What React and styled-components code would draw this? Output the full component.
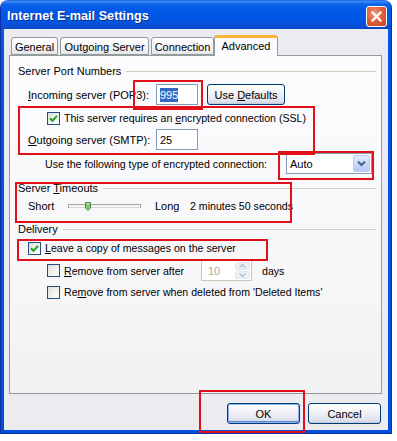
import React from "react";
import styled, { createGlobalStyle } from "styled-components";

const FS = "10.6px";

const Global = createGlobalStyle`
  html, body { margin: 0; padding: 0; background: #ffffff; }
  body { font-family: "Liberation Sans", Arial, sans-serif; font-size: ${FS}; color: #000; }
  * { box-sizing: border-box; }
`;

const Window = styled.div`
  position: relative;
  width: 392px;
  height: 434px;
  display: flex;
  flex-direction: column;
  border-radius: 8px 8px 0 0;
  background: linear-gradient(180deg, #3d8cf5 0%, #0a5de6 4%, #0055e5 10%, #0050dd 100%);
  border: 1px solid #0831a8;
  border-top-color: #2a6ee8;
  overflow: hidden;
`;

const TitleBar = styled.div`
  height: 28px;
  flex: none;
  display: flex;
  align-items: center;
  justify-content: space-between;
  padding: 1px 4px 0 6px;
  background: linear-gradient(180deg, #3b8ef9 0%, #0d62e6 12%, #0058e8 35%, #0257e4 70%, #0a4dd2 92%, #0a45c4 100%);
`;

const Title = styled.span`
  font-family: "Liberation Sans", Arial, sans-serif;
  font-weight: bold;
  font-size: 12.7px;
  color: #ffffff;
  text-shadow: 1px 1px 0 #0a2a8c;
`;

const CloseButton = styled.div`
  width: 21px;
  height: 21px;
  border-radius: 3px;
  border: 1px solid #ffffff;
  background: radial-gradient(circle at 40% 35%, #f0a080 0%, #e0623c 45%, #c8401c 100%);
  display: flex;
  align-items: center;
  justify-content: center;
  margin-top: 1px;
`;

const Body = styled.div`
  flex: 1;
  margin: 0 3px 3px 3px;
  background: #ecebf0;
  display: flex;
  flex-direction: column;
  padding: 6px 7px 0 5px;
`;

const TabRow = styled.div`
  display: flex;
  align-items: flex-end;
  height: 20px;
  padding-left: 2px;
  position: relative;
  z-index: 1;
`;

const Tab = styled.div`
  height: ${(p) => (p.$active ? "21px" : "18px")};
  padding: ${(p) => (p.$active ? "2px 6px 0 6px" : "1px 5px 0 5px")};
  margin-right: ${(p) => (p.$active ? "0" : "2px")};
  margin-left: ${(p) => (p.$active ? "-2px" : "0")};
  margin-bottom: ${(p) => (p.$active ? "-1px" : "0")};
  border: 1px solid #919b9c;
  border-bottom: ${(p) => (p.$active ? "none" : "1px solid #919b9c")};
  border-top: ${(p) => (p.$active ? "3px solid #f9b43a" : "1px solid #919b9c")};
  border-radius: 3px 3px 0 0;
  background: ${(p) =>
    p.$active ? "#fcfcfe" : "linear-gradient(180deg, #ffffff 0%, #f4f4f6 60%, #e6e6ea 100%)"};
  display: flex;
  align-items: ${(p) => (p.$active ? "flex-start" : "center")};
  white-space: nowrap;
  font-size: 11px;
  width: ${(p) => p.$w}px;
  justify-content: center;
`;

const Panel = styled.div`
  height: 339px;
  border: 1px solid #919b9c;
  background: linear-gradient(180deg, #fcfcfe 0%, #f6f6f9 70%, #f1f1f4 100%);
  padding: 8px 5px 0 8px;
  display: flex;
  flex-direction: column;
  width: 373px;
`;

const GroupTitle = styled.div`
  height: 14px;
  display: flex;
  align-items: center;
  gap: 5px;
  margin-top: ${(p) => p.$mt || 0}px;
  font-size: 11px;
  white-space: nowrap;
  &::after {
    content: "";
    flex: 1;
    height: 1px;
    background: #d0d0bf;
    margin-top: 1px;
  }
`;

const Row = styled.div`
  height: ${(p) => p.$h || 16}px;
  margin-top: ${(p) => p.$mt || 0}px;
  padding-left: ${(p) => p.$indent || 0}px;
  display: flex;
  align-items: center;
  white-space: nowrap;
  font-size: ${FS};
`;

const Label = styled.span`
  width: ${(p) => (p.$w ? `${p.$w}px` : "auto")};
  flex: none;
  margin-left: ${(p) => p.$ml || 0}px;
  font-size: ${(p) => p.$fs || "inherit"};
`;

const U = styled.span`
  text-decoration: underline;
  text-underline-offset: 1px;
`;

const TextBox = styled.div`
  width: ${(p) => p.$w}px;
  height: 21px;
  border: 1px solid #7f9db9;
  background: #ffffff;
  display: flex;
  align-items: center;
  padding-left: 3px;
  font-size: 11px;
`;

const Selected = styled.span`
  background: #316ac5;
  color: #ffffff;
  padding: 1px 0;
`;

const XPButton = styled.div`
  width: ${(p) => p.$w}px;
  height: 21px;
  margin-left: ${(p) => p.$ml || 0}px;
  border: 1px solid #003c74;
  border-radius: 3px;
  background: linear-gradient(180deg, #ffffff 0%, #f5f5f8 35%, #e4e7f0 75%, #d0d6e6 100%);
  box-shadow: ${(p) => (p.$default ? "inset 0 0 0 1px #8ab0ee, inset 0 -1px 0 1px #5a88d8" : "inset 0 -1px 0 #c6cede")};
  display: flex;
  align-items: center;
  justify-content: center;
  font-size: 11px;
`;

const CheckBoxBox = styled.div`
  width: 13px;
  height: 13px;
  flex: none;
  border: 1px solid #1c5180;
  background: linear-gradient(135deg, #dcdcd7 0%, #f4f4f0 60%, #ffffff 100%);
  display: flex;
  align-items: center;
  justify-content: center;
  margin-right: 3px;
`;

const SelectBox = styled.div`
  width: 86px;
  height: 21px;
  border: 1px solid #7f9db9;
  background: #ffffff;
  display: flex;
  align-items: stretch;
  padding: 1px;
  font-size: 11px;
`;

const SelectText = styled.div`
  flex: 1;
  display: flex;
  align-items: center;
  padding-left: 2px;
`;

const DropButton = styled.div`
  width: 17px;
  border: 1px solid #b9cdf5;
  border-radius: 2px;
  background: linear-gradient(180deg, #e2eafe 0%, #c6d6fc 60%, #b4c8f8 100%);
  display: flex;
  align-items: center;
  justify-content: center;
`;

const SpinBox = styled.div`
  width: 51px;
  height: 21px;
  margin-left: ${(p) => p.$ml || 0}px;
  border: 1px solid #c9c7ba;
  background: #ffffff;
  display: flex;
  align-items: stretch;
  padding: 1px;
  color: #aca899;
  font-size: 11px;
`;

const SpinText = styled.div`
  flex: 1;
  display: flex;
  align-items: center;
  padding-left: 5px;
`;

const SpinButtons = styled.div`
  width: 15px;
  display: flex;
  flex-direction: column;
  gap: 1px;
`;

const SpinHalf = styled.div`
  flex: 1;
  border-radius: 2px;
  background: #eef1f8;
  border: 1px solid #dfe4ef;
  display: flex;
  align-items: center;
  justify-content: center;
`;

const ButtonBar = styled.div`
  display: flex;
  justify-content: flex-end;
  gap: 8px;
  margin-top: 9px;
`;

const Mark = styled.div`
  position: absolute;
  left: ${(p) => p.$x}px;
  top: ${(p) => p.$y}px;
  width: ${(p) => p.$w}px;
  height: ${(p) => p.$h}px;
  border: 2px solid #e2101a;
  pointer-events: none;
  z-index: 5;
`;

const Check = ({ checked }) => (
  <CheckBoxBox>
    {checked && (
      <svg width="9" height="9" viewBox="0 0 9 9">
        <path d="M1 4.2 L3.5 6.8 L8 1.8" fill="none" stroke="#21a121" strokeWidth="2" />
      </svg>
    )}
  </CheckBoxBox>
);

const Slider = () => (
  <svg width="74" height="14" viewBox="0 0 74 14" style={{ flex: "none" }}>
    <rect x="0.5" y="5.5" width="72" height="3" fill="#f4f4f0" stroke="#a8a8a0" />
    <line x1="1" y1="8" x2="72" y2="8" stroke="#ffffff" />
    <path d="M17.5 3.5 H22.5 V9 L20 11.5 L17.5 9 Z" fill="#7ccc78" stroke="#5a8a58" />
    <line x1="18.5" y1="4.5" x2="21.5" y2="4.5" stroke="#c8f0c0" />
  </svg>
);

export default function App() {
  return (
    <>
      <Global />
      <Window>
        <TitleBar>
          <Title>Internet E-mail Settings</Title>
          <CloseButton>
            <svg width="11" height="11" viewBox="0 0 11 11">
              <path d="M1.5 1.5 L9.5 9.5 M9.5 1.5 L1.5 9.5" stroke="#ffffff" strokeWidth="2.2" strokeLinecap="square" />
            </svg>
          </CloseButton>
        </TitleBar>
        <Body>
          <TabRow>
            <Tab $w={47}>General</Tab>
            <Tab $w={89}>Outgoing Server</Tab>
            <Tab $w={63}>Connection</Tab>
            <Tab $active $w={64}>Advanced</Tab>
          </TabRow>
          <Panel>
            <GroupTitle>Server Port Numbers</GroupTitle>
            <Row $h={21} $mt={6} $indent={10}>
              <Label $w={128} $fs="11px">
                <U>I</U>ncoming server (POP3):
              </Label>
              <TextBox $w={42}>
                <Selected>995</Selected>
              </TextBox>
              <XPButton $w={78} $ml={9}>
                Use&nbsp;<U>D</U>efaults
              </XPButton>
            </Row>
            <Row $h={16} $mt={5} $indent={29}>
              <Check checked />
              <Label $ml={1}>
                This server requires an <U>e</U>ncrypted connection (SSL)
              </Label>
            </Row>
            <Row $h={21} $mt={3} $indent={10}>
              <Label $w={128} $fs="11px">
                <U>O</U>utgoing server (SMTP):
              </Label>
              <TextBox $w={42}>25</TextBox>
            </Row>
            <Row $h={21} $mt={3} $indent={27}>
              <Label $w={241}>Use the following type of encrypted connection:</Label>
              <SelectBox>
                <SelectText>Auto</SelectText>
                <DropButton>
                  <svg width="9" height="7" viewBox="0 0 9 7">
                    <path d="M1 1.5 L4.5 5 L8 1.5" fill="none" stroke="#4d6185" strokeWidth="2" />
                  </svg>
                </DropButton>
              </SelectBox>
            </Row>
            <GroupTitle $mt={7}>
              <span>
                Server <U>T</U>imeouts
              </span>
            </GroupTitle>
            <Row $h={16} $mt={3} $indent={10}>
              <Label $w={40} $fs="11px">Short</Label>
              <Slider />
              <Label $ml={13} $w={35} $fs="11px">Long</Label>
              <Label>2 minutes 50 seconds</Label>
            </Row>
            <GroupTitle $mt={8}>Delivery</GroupTitle>
            <Row $h={16} $mt={4} $indent={10}>
              <Check checked />
              <Label $ml={1}>
                <U>L</U>eave a copy of messages on the server
              </Label>
            </Row>
            <Row $h={21} $mt={4} $indent={29}>
              <Check />
              <Label $ml={1} $w={137}>
                <U>R</U>emove from server after
              </Label>
              <SpinBox>
                <SpinText>10</SpinText>
                <SpinButtons>
                  <SpinHalf>
                    <svg width="7" height="4" viewBox="0 0 7 4">
                      <path d="M0.5 3.5 L3.5 0.5 L6.5 3.5" fill="none" stroke="#b8c2d8" strokeWidth="1.5" />
                    </svg>
                  </SpinHalf>
                  <SpinHalf>
                    <svg width="7" height="4" viewBox="0 0 7 4">
                      <path d="M0.5 0.5 L3.5 3.5 L6.5 0.5" fill="none" stroke="#b8c2d8" strokeWidth="1.5" />
                    </svg>
                  </SpinHalf>
                </SpinButtons>
              </SpinBox>
              <Label $ml={10}>days</Label>
            </Row>
            <Row $h={16} $mt={3} $indent={29}>
              <Check />
              <Label $ml={1}>
                Re<U>m</U>ove from server when deleted from 'Deleted Items'
              </Label>
            </Row>
          </Panel>
          <ButtonBar>
            <XPButton $w={73} $default>
              OK
            </XPButton>
            <XPButton $w={73}>Cancel</XPButton>
          </ButtonBar>
        </Body>
        <Mark $x={132} $y={79} $w={70} $h={30} />
        <Mark $x={17} $y={105} $w={297} $h={49} />
        <Mark $x={277} $y={150} $w={96} $h={29} />
        <Mark $x={14} $y={181} $w={277} $h={41} />
        <Mark $x={16} $y={238} $w={251} $h={22} />
        <Mark $x={198} $y={389} $w={106} $h={43} />
      </Window>
    </>
  );
}
